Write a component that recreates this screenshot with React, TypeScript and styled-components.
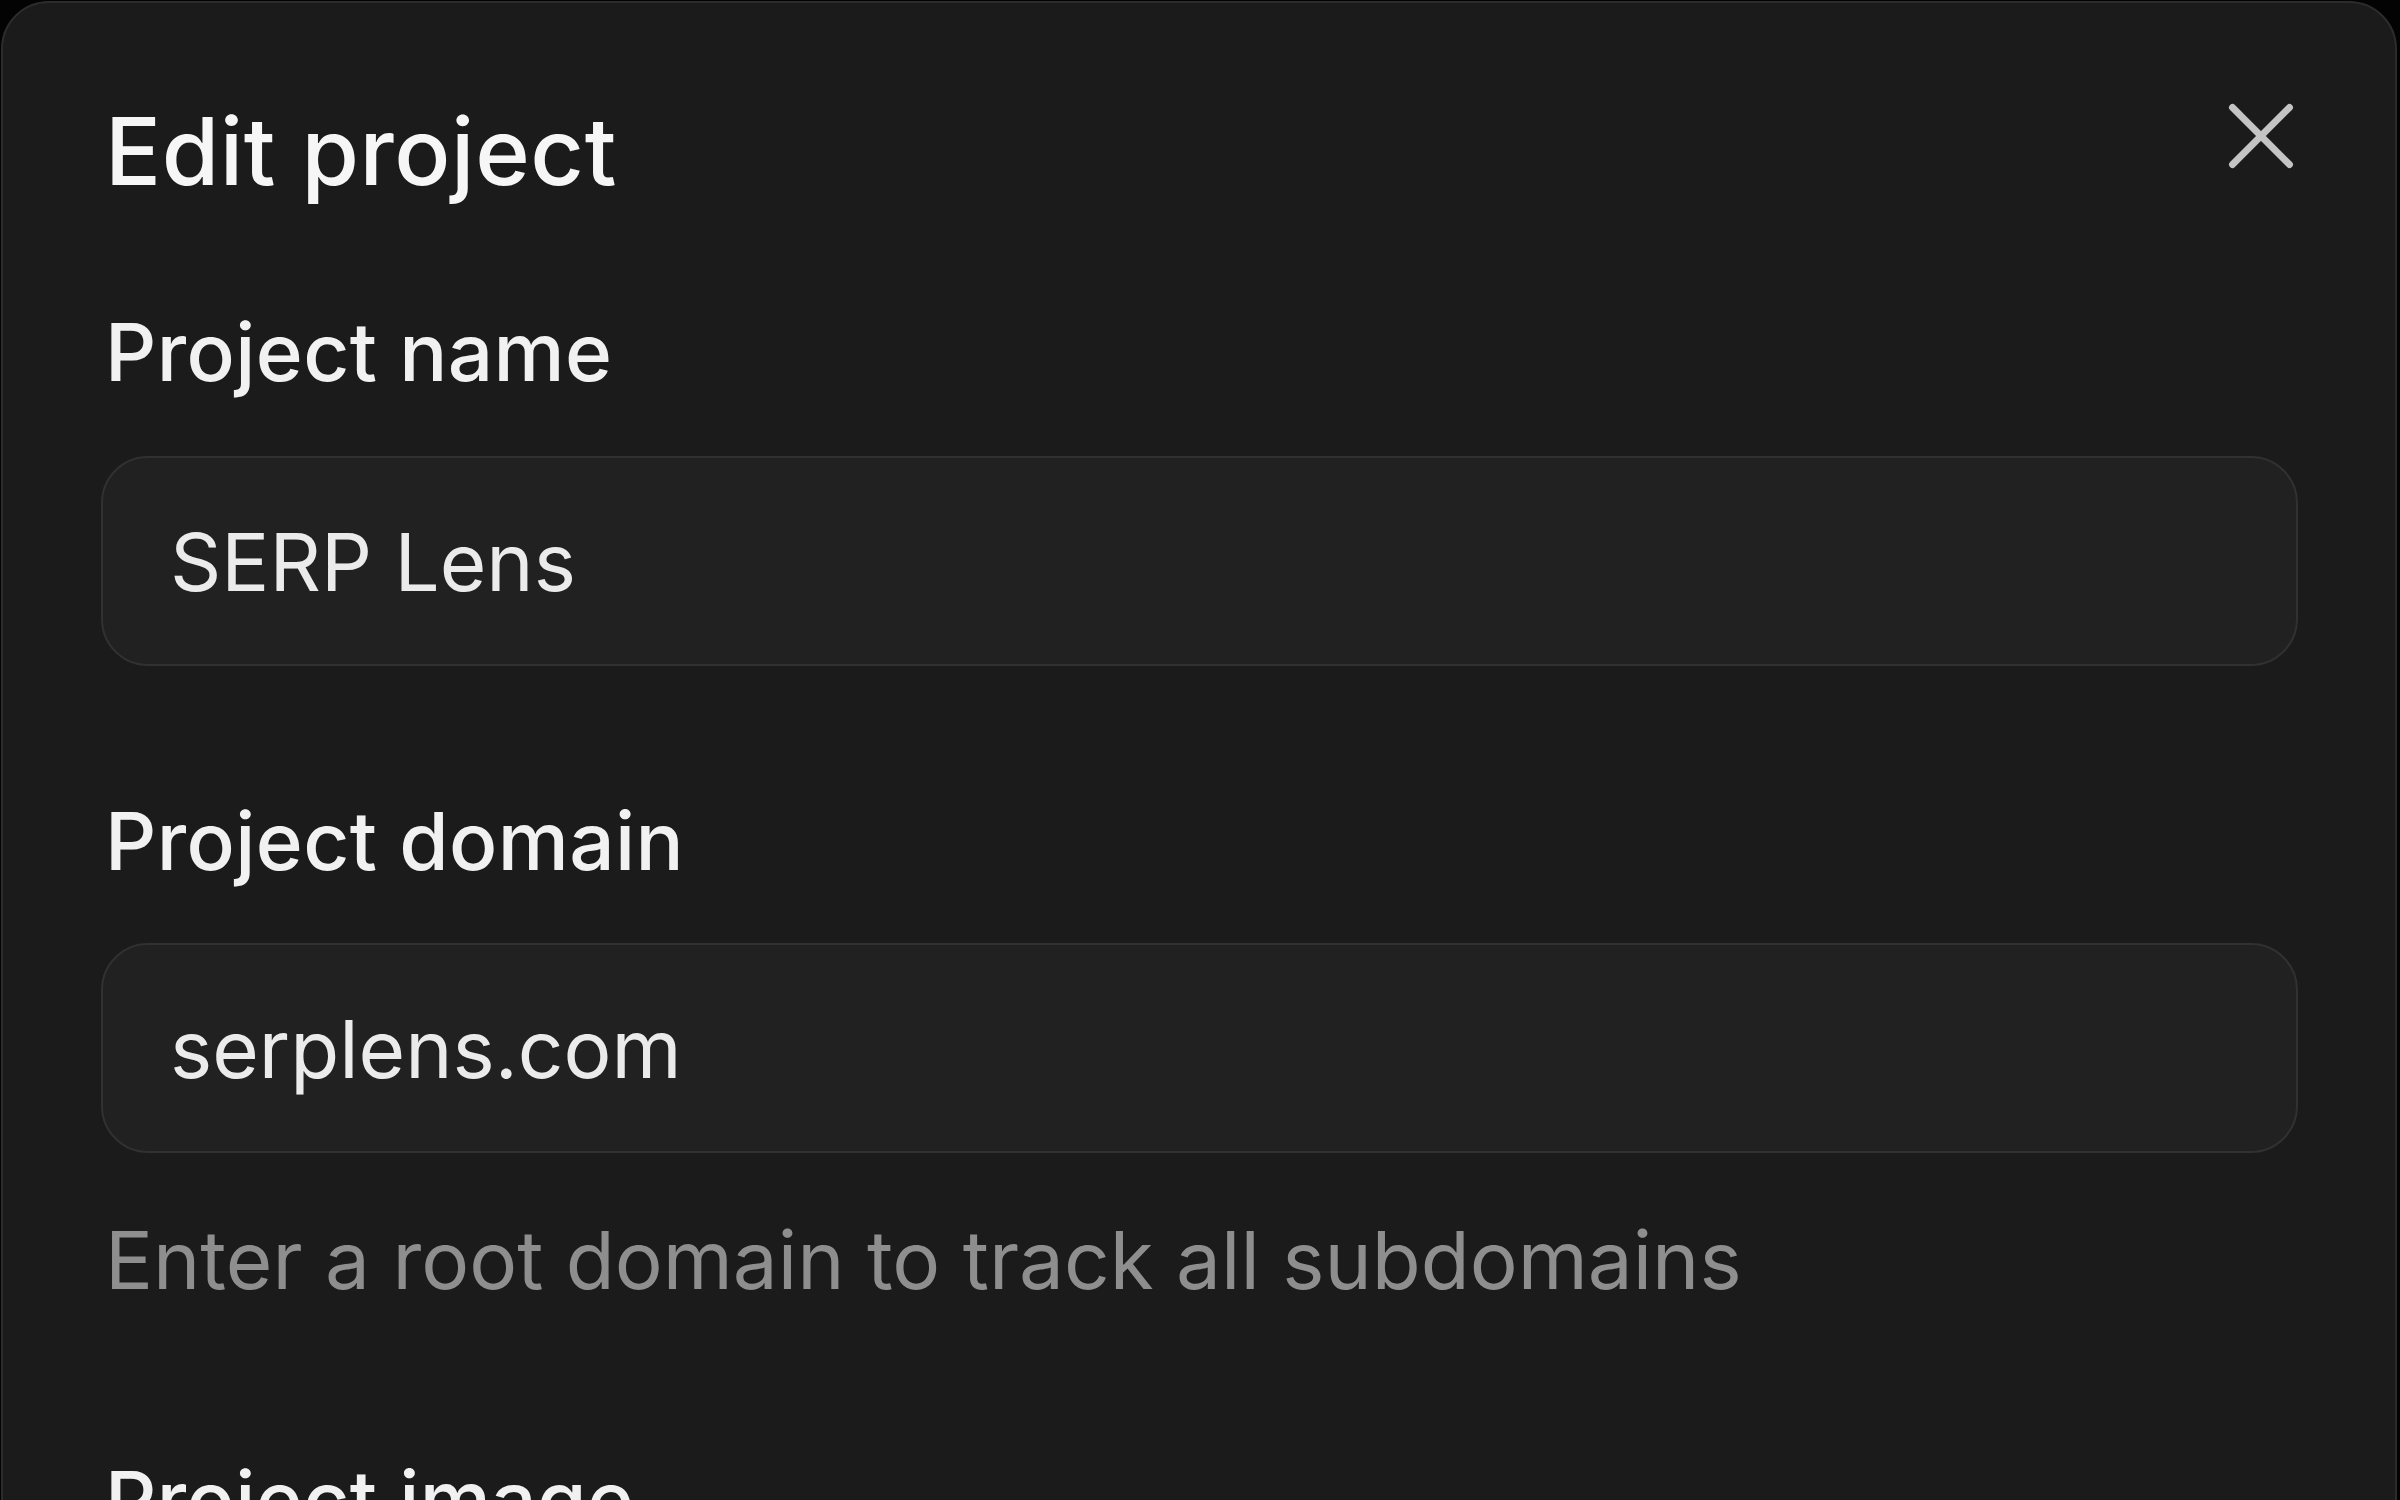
import React from "react";
import styled, { createGlobalStyle } from "styled-components";

const GlobalStyle = createGlobalStyle`
  html, body {
    margin: 0;
    padding: 0;
    background: #030303;
    width: 2400px;
    height: 1500px;
    overflow: hidden;
  }
  * { box-sizing: border-box; }
  body {
    font-family: Inter, "Noto Sans", "Liberation Sans", sans-serif;
    -webkit-font-smoothing: antialiased;
  }
`;

const Page = styled.div`
  width: 2400px;
  height: 1500px;
  padding: 1px 3px 0 1px;
  overflow: hidden;
`;

const Dialog = styled.section`
  width: 2396px;
  height: 1700px;
  background: #1b1b1b;
  border: 2px solid #2c2c2c;
  border-radius: 48px;
  padding: 102px 97px 0 98px;
  display: flex;
  flex-direction: column;
`;

const Header = styled.header`
  display: flex;
  justify-content: space-between;
  align-items: flex-start;
  height: 92px;
  margin-bottom: 115px;
`;

const Title = styled.h2`
  margin: 0 0 0 4px;
  font-size: 93px;
  line-height: 1;
  font-weight: 500;
  color: #f6f6f6;
  letter-spacing: 0.6px;
`;

const CloseButton = styled.button`
  width: 114px;
  height: 114px;
  margin: -26px -20px 0 0;
  padding: 0;
  border: 0;
  background: transparent;
  color: #c4c4c4;
  display: flex;
  align-items: center;
  justify-content: center;
  cursor: pointer;
`;

const Field = styled.div<{ $gap: number }>`
  display: flex;
  flex-direction: column;
  margin-bottom: ${(p) => p.$gap}px;
`;

const Label = styled.label<{ $space: number }>`
  margin: 0 0 ${(p) => p.$space}px 4px;
  font-size: 80px;
  line-height: 1;
  font-weight: 500;
  color: #f1f1f1;
  letter-spacing: 0.4px;
`;

const TextInput = styled.input`
  width: 100%;
  height: 210px;
  border: 2px solid #313131;
  border-radius: 47px;
  background: #212121;
  padding: 0 60px 0 67px;
  font-family: Inter, "Noto Sans", "Liberation Sans", sans-serif;
  font-size: 80px;
  font-weight: 400;
  color: #ebebeb;
  outline: none;
`;

const Help = styled.p`
  margin: 67px 0 0 4px;
  font-size: 80px;
  line-height: 1;
  font-weight: 400;
  color: #8e8e8e;
`;

const XIcon = () => (
  <svg width="114" height="114" viewBox="0 0 24 24" fill="none" stroke="currentColor" strokeWidth="1.45" strokeLinecap="round" strokeLinejoin="round">
    <path d="M18 6 6 18" />
    <path d="m6 6 12 12" />
  </svg>
);

export default function App() {
  return (
    <>
      <GlobalStyle />
      <Page>
        <Dialog role="dialog" aria-label="Edit project">
          <Header>
            <Title>Edit project</Title>
            <CloseButton aria-label="Close">
              <XIcon />
            </CloseButton>
          </Header>
          <Field $gap={135}>
            <Label $space={64} htmlFor="pname">Project name</Label>
            <TextInput id="pname" defaultValue="SERP Lens" />
          </Field>
          <Field $gap={160}>
            <Label $space={62} htmlFor="pdomain">Project domain</Label>
            <TextInput id="pdomain" defaultValue="serplens.com" />
            <Help>Enter a root domain to track all subdomains</Help>
          </Field>
          <Field $gap={0}>
            <Label $space={40}>Project image</Label>
          </Field>
        </Dialog>
      </Page>
    </>
  );
}
